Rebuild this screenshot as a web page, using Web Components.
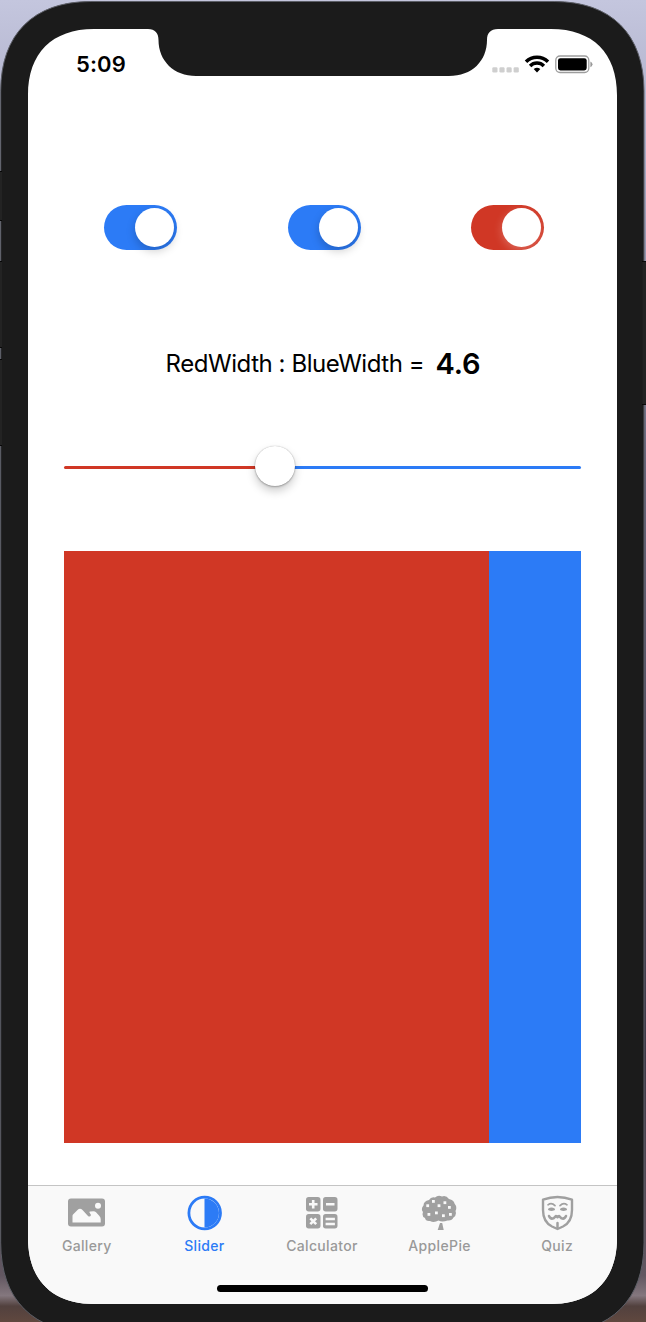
<!DOCTYPE html>
<html lang="en">
<head>
<meta charset="utf-8">
<title>Slider</title>
<style>
html,body{margin:0;height:100%;overflow:hidden}
body{font-family:Inter,"Liberation Sans",sans-serif;color:#000}
</style>
</head>
<body>
<phone-shell>
  <status-bar time="5:09"></status-bar>
  <switch-row>
    <toggle-switch></toggle-switch>
    <toggle-switch></toggle-switch>
    <toggle-switch tone="red"></toggle-switch>
  </switch-row>
  <ratio-label value="4.6">RedWidth : BlueWidth =</ratio-label>
  <ratio-slider></ratio-slider>
  <color-split></color-split>
  <tab-bar>
    <tab-item icon="gallery">Gallery</tab-item>
    <tab-item icon="slider" active>Slider</tab-item>
    <tab-item icon="calculator">Calculator</tab-item>
    <tab-item icon="tree">ApplePie</tab-item>
    <tab-item icon="mask">Quiz</tab-item>
  </tab-bar>
</phone-shell>
<script>
const define = (name, html) => customElements.define(name, class extends HTMLElement {
  constructor() {
    super();
    this.attachShadow({ mode: 'open' });
  }
  connectedCallback() {
    this.shadowRoot.innerHTML = typeof html === 'function' ? html(this) : html;
  }
});

// Rounded rectangle with slightly stretched corners; `notch` is inserted along the top edge.
function squircle(x, y, w, h, r, notch = '') {
  const e = r * 1.12, c = r * .41, X = x + w, Y = y + h;
  return `M${x} ${y + e}C${x} ${y + c} ${x + c} ${y} ${x + e} ${y}${notch}` +
    `L${X - e} ${y}C${X - c} ${y} ${X} ${y + c} ${X} ${y + e}` +
    `L${X} ${Y - e}C${X} ${Y - c} ${X - c} ${Y} ${X - e} ${Y}` +
    `L${x + e} ${Y}C${x + c} ${Y} ${x} ${Y - c} ${x} ${Y - e}Z`;
}

define('phone-shell', () => {
  const body = squircle(.7, 1.5, 643.3, 1331, 80);
  const notch = 'L120 0C127 0 130.5 4 130.5 11C130.5 32 146 47 168 47L421 47C444 47 459 32 459 11C459 4 462.5 0 470 0';
  const face = squircle(0, 0, 589, 1275, 59, notch);
  return `<style>
  :host{display:block;position:relative;box-sizing:border-box;width:646px;height:1322px;padding:29px 29px 18px 28px;overflow:hidden}
  .back{position:absolute;inset:0;width:646px;height:1322px}
  .face{position:relative;display:flex;flex-direction:column;width:589px;height:1275px;background:#fff;clip-path:path("${face}")}
  </style>
  <svg class="back" viewBox="0 0 646 1322">
    <defs>
      <linearGradient id="sky" x1="0" y1="0" x2="0" y2="1"><stop offset="0" stop-color="#c4c6de"/><stop offset=".12" stop-color="#aaabc5"/><stop offset=".35" stop-color="#656579"/><stop offset=".8" stop-color="#3d3947"/><stop offset=".965" stop-color="#625761"/><stop offset=".98" stop-color="#84777e"/><stop offset=".988" stop-color="#52413e"/><stop offset="1" stop-color="#60483f"/></linearGradient>
    </defs>
    <rect width="646" height="1322" fill="url(#sky)"/>
    <path d="${body}" fill="#1b1b1b" stroke="#5c5e66" stroke-width="1"/>
    <g fill="#232323"><rect y="171" width="2" height="50"/><rect y="261" width="2" height="87"/><rect y="359" width="2" height="86"/><rect x="642.500" y="262" width="4" height="142"/></g>
    <g fill="#080808"><rect y="171" width="2" height="1"/><rect y="220" width="2" height="1"/><rect y="261" width="2" height="1"/><rect y="347" width="2" height="1"/><rect y="359" width="2" height="1"/><rect y="445" width="2" height="1"/><rect x="642" y="261" width="4" height="1"/><rect x="642" y="404" width="4" height="1"/></g>
  </svg>
  <div class="face"><slot></slot></div>`;
});

define('status-bar', el => `<style>
  :host{display:flex;box-sizing:border-box;height:71px;padding:24px 24px 0 48px;justify-content:space-between;align-items:flex-start}
  time{margin-top:-1px;font-size:22px;line-height:24px;font-weight:600;letter-spacing:.1px}
  svg{width:102px;height:24px}
  </style>
  <time>${el.getAttribute('time')}</time>
  <svg viewBox="0 0 102 24">
    <g fill="#cfcfcf"><rect x="1.300" y="14.300" width="5.200" height="5.200" rx="1.300"/><rect x="8.400" y="14.300" width="5.200" height="5.200" rx="1.300"/><rect x="15.500" y="14.300" width="5.200" height="5.200" rx="1.300"/><rect x="22.600" y="14.300" width="5.200" height="5.200" rx="1.300"/></g>
    <g fill="none" stroke="#000" stroke-width="3.500"><path d="M35 8.700A15.700 15.700 0 0 1 57 8.700"/><path d="M39.100 12.900A9.800 9.800 0 0 1 52.900 12.900"/></g>
    <path d="M42.700 16.100Q46 13.600 49.300 16.100L46 19.400Z"/>
    <rect x="64.800" y="3" width="33" height="16.500" rx="4.200" fill="none" stroke="#9d9d9d" stroke-width="1.300"/>
    <rect x="67" y="5.200" width="28.700" height="12.200" rx="2.400"/>
    <path d="M99.400 8.400Q101.500 9.300 101.500 11.300T99.400 14.200Z" fill="#999"/>
  </svg>`);

define('switch-row', `<style>
  :host{display:grid;grid-template-columns:183.500px 183.500px 73px;margin:105px 0 0 76px}
  </style><slot></slot>`);

define('toggle-switch', `<style>
  :host{display:flex;justify-content:flex-end;align-items:center;box-sizing:border-box;width:73px;height:45px;padding-right:3px;border-radius:23px;background:#2c7bf6}
  i{width:39px;height:39px;border-radius:50%;background:#fff;box-shadow:0 4px 10px rgba(0,0,0,.2)}
  :host([tone=red]){background:#d03725}
  :host([tone=red]) i{box-shadow:0 3px 10px rgba(255,255,255,.25)}
  </style><i></i>`);

define('ratio-label', el => `<style>
  :host{display:flex;align-items:flex-start;height:40px;margin:93px 0 0 137.500px;white-space:nowrap;font-size:24px;line-height:40px}
  span{width:270px;letter-spacing:-.44px;margin-top:1px}
  b{font-size:29px;font-weight:600;letter-spacing:-.1px;margin-top:1px}
  </style><span><slot></slot></span><b>${el.getAttribute('value')}</b>`);

define('ratio-slider', `<style>
  :host{display:flex;align-items:center;width:517px;height:40px;margin:63px 0 0 36px}
  .min,.max{height:3px;margin-top:2px}
  .min{width:195px;background:#d03725;border-radius:2px 0 0 2px}
  .max{flex:1;background:#2c7bf6;border-radius:0 2px 2px 0}
  i{width:40px;height:40px;margin:0 -4px;border-radius:50%;background:#fff;position:relative;box-shadow:0 0 1px rgba(0,0,0,.3),0 1px 2px rgba(0,0,0,.25),0 5px 10px rgba(0,0,0,.2)}
  </style><div class="min"></div><i></i><div class="max"></div>`);

define('color-split', `<style>
  :host{display:flex;width:517px;height:592px;margin:65px 0 0 36px}
  .r{width:425px;background:#d03725}.b{flex:1;background:#2c7bf6}
  </style><div class="r"></div><div class="b"></div>`);

define('tab-bar', `<style>
  :host{display:grid;grid-template-columns:repeat(5,1fr);grid-template-rows:1fr 19px;box-sizing:border-box;height:119px;margin-top:auto;padding-right:1px;border-top:1px solid #c4c4c4;background:#f9f9f9}
  .home{grid-column:1/-1;justify-self:center;width:211px;height:7px;margin-right:-1px;border-radius:4px;background:#000}
  </style><slot></slot><div class="home"></div>`);

const icons = {
  gallery: `<path fill-rule="evenodd" d="M4 3.500H35Q38 3.500 38 6.500V28.500Q38 31.500 35 31.500H4Q1 31.500 1 28.500V6.500Q1 3.500 4 3.500ZM31 7.700A3 3 0 1 0 31 13.700 3 3 0 1 0 31 7.700ZM5.500 27.500H33.700V24Q33.700 22 32 20.500L29 17.300Q28 16.300 26.500 16.300L23.300 16.500Q22 16.500 22.500 17.500L24 20Q23 22.500 21 21L15.500 15Q13 12.500 10.500 15L6 19.500Q5.500 20 5.500 21Z"/>`,
  slider: `<circle cx="19.700" cy="18" r="15.800" fill="none" stroke="currentColor" stroke-width="2.800"/><path d="M19.500 3.500A14.500 14.500 0 0 1 19.500 32.500Z"/>`,
  calculator: `<g><rect x="4" y="2" width="14.500" height="14.500" rx="2.700"/><rect x="21" y="2" width="14.500" height="14.500" rx="2.700"/><rect x="4" y="19" width="14.500" height="14.500" rx="2.700"/><rect x="21" y="19" width="14.500" height="14.500" rx="2.700"/></g><g stroke="#f9f9f9" stroke-width="2.600" fill="none"><path d="M11.200 5V13.500M7 9.300H15.500M24 9.300H32.500M8.300 23.300L14.200 29.200M14.200 23.300L8.300 29.200M23.600 24H32.900M23.600 29H32.900"/></g>`,
  tree: `<path d="M9 5Q11 1.500 15 2.500Q18-.200 22 1.500Q26 0 29 4Q34 5 34.500 8.500Q37.500 12 35.500 16Q37 20 33.500 22.500Q32 26 27.500 25.500Q22 27.500 18.500 25.500Q14 28 10 26Q5.500 26.500 5 23Q1.500 21.500 3 17Q.500 14 3.500 10.500Q3.500 6 9 5Z"/><path d="M20 28H22.200L23.700 35H17.700Z"/><g fill="#f9f9f9"><rect x="12" y="5" width="2.800" height="2.800"/><rect x="23.500" y="6.300" width="2.800" height="2.800"/><rect x="6.300" y="9.300" width="2.800" height="2.800"/><rect x="17.600" y="9.300" width="2.800" height="2.800"/><rect x="28" y="11" width="2.800" height="2.800"/><rect x="7.500" y="18" width="2.800" height="2.800"/><rect x="15" y="16.500" width="2.800" height="2.800"/><rect x="22" y="19.300" width="2.800" height="2.800"/><rect x="29" y="18" width="2.800" height="2.800"/></g>`,
  mask: `<g fill="none" stroke="currentColor" stroke-linecap="round" stroke-linejoin="round"><path stroke-width="2.400" d="M5 4.700Q19.500-.600 34 4.700V15Q34 27 25 31.500L19.500 34L14 31.500Q5 27 5 15Z"/><path stroke-width="1.700" d="M10 9.800Q13.500 7 17 10.600M22 10.600Q25.500 7 29 9.800"/><path stroke-width="2" d="M11 14.400Q13.500 12.800 16 14.400Q13.500 15.400 11 14.400ZM23 14.400Q25.500 12.800 28 14.400Q25.500 15.400 23 14.400Z"/><path stroke-width="2.500" d="M11 21Q12.500 24.500 15.500 23.300L18 21L19.500 22.300L21 21L23.500 23.300Q26.500 24.500 28 21M19.500 28V33"/></g>`
};

define('tab-item', el => `<style>
  :host{display:flex;flex-direction:column;align-items:center;padding-top:9px;color:#999;font-size:14px;font-weight:500;letter-spacing:.35px;line-height:18px}
  svg{width:39px;height:36px;margin-bottom:6px;color:#a0a0a0;fill:currentColor}
  :host([active]),:host([active]) svg{color:#2c7bf6}
  </style><svg viewBox="0 0 39 36">${icons[el.getAttribute('icon')]}</svg><span><slot></slot></span>`);
</script>
</body>
</html>
